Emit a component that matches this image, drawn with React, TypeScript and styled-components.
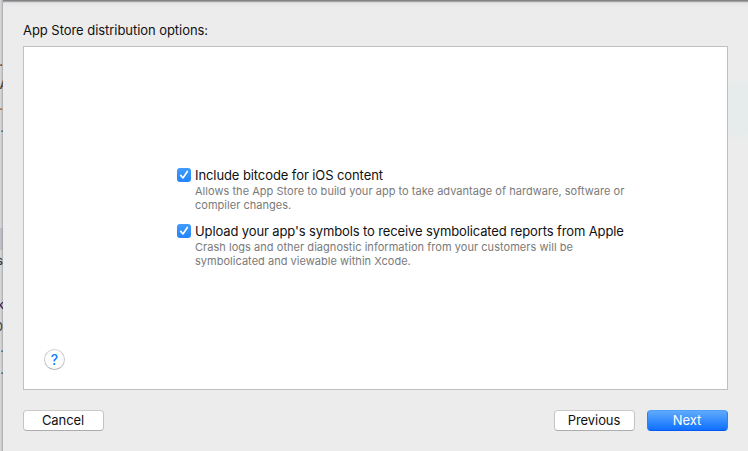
import React from "react";
import styled, { createGlobalStyle } from "styled-components";

const GlobalStyle = createGlobalStyle`
  * { box-sizing: border-box; }
  body { margin: 0; overflow: hidden; font-family: Inter, "Liberation Sans", sans-serif; }
`;

const Window = styled.div`
  display: flex;
  width: 748px;
  height: 451px;
  overflow: hidden;
  background: #ececec;
`;

const Backdrop = styled.div`
  position: relative;
  flex: none;
  width: 3px;
  height: 451px;
  overflow: hidden;
  background: linear-gradient(90deg, #d4d5d6 0 1px, #c9cacb 1px 2px, #b3b4b5 2px);
`;

const SelectedLine = styled.div`
  height: 22px;
  margin-top: 228px;
  background: linear-gradient(90deg, #c0c0c6 0 1px, #b7b7bd 1px 2px, #a7a7ac 2px);
`;

const CodeEdge = styled.span<{ $top: number; $right: number; $color: string }>`
  position: absolute;
  top: ${(p) => p.$top}px;
  right: ${(p) => p.$right}px;
  color: ${(p) => p.$color};
  font-size: 12px;
  font-weight: 500;
  line-height: 16px;
`;

const Sheet = styled.main`
  flex: 1;
  display: flex;
  flex-direction: column;
  padding: 21px 20px 0 20px;
  background:
    linear-gradient(#858386 0 1px, #a4a2a4 1px 2px, #d8d8d8 2px 3px, #e5e5e5 3px, #ececec 7px, transparent 7px),
    linear-gradient(transparent 78px, #e6ebec 90px 130px, transparent 142px) right top / 20px 100% no-repeat,
    #ececec;
`;

const Heading = styled.h1`
  margin: 0;
  height: 25px;
  font-size: 13px;
  font-weight: 400;
  line-height: 19px;
  letter-spacing: -0.05px;
  color: #111;
  white-space: nowrap;
`;

const Panel = styled.section`
  display: flex;
  flex-direction: column;
  width: 705px;
  height: 344px;
  padding: 121px 0 0 153px;
  border: 1px solid #c0c0c0;
  background: #fff;
`;

const Option = styled.div`
  display: grid;
  grid-template-columns: 18px 1fr;
  height: 56px;
`;

const Checkbox = styled.button`
  display: block;
  width: 14px;
  height: 14px;
  padding: 0;
  border: 0;
  border-radius: 3px;
  background: linear-gradient(#429cff, #2283fb);
  svg { display: block; }
`;

const OptionTitle = styled.div<{ $spacing: number }>`
  height: 16px;
  font-size: 13px;
  line-height: 14px;
  letter-spacing: ${(p) => p.$spacing}px;
  color: #111;
  white-space: nowrap;
`;

const Description = styled.div<{ $spacing: number }>`
  font-size: 11px;
  line-height: 14px;
  letter-spacing: ${(p) => p.$spacing}px;
  color: #7a7a7a;
  white-space: nowrap;
`;

const HelpButton = styled.button`
  width: 21px;
  height: 21px;
  margin: 69px 0 0 -133px;
  padding: 0;
  border: 1px solid #c6c6c6;
  border-top-color: #d4d4d4;
  border-bottom-color: #b4b4b4;
  border-radius: 50%;
  background: #fff;
  color: #147efb;
  font: 500 14px/19px Inter, sans-serif;
`;

const Footer = styled.footer`
  display: flex;
  width: 705px;
  margin-top: 20px;
`;

const Button = styled.button<{ $primary?: boolean; $pushRight?: boolean }>`
  width: 81px;
  height: 21px;
  margin-left: ${(p) => (p.$pushRight ? "auto" : p.$primary ? "12px" : "0")};
  padding: 0 1px 0 0;
  border: 1px solid;
  border-color: ${(p) => (p.$primary ? "#4ca0fb #2a82f8 #0758f3" : "#cbcbcb #c3c3c3 #adadad")};
  border-radius: 4px;
  background: ${(p) => (p.$primary ? "linear-gradient(#63adfb, #0a6dff) border-box" : "#fff")};
  color: ${(p) => (p.$primary ? "#fff" : "#111")};
  font: 400 13px/19px Inter, sans-serif;
  letter-spacing: -0.08px;
`;

const codeEdges = [
  { text: ".", top: 54, right: 0, color: "#493b36" },
  { text: "A", top: 77, right: -5, color: "#40434f" },
  { text: ".", top: 98, right: 0, color: "#8a5037" },
  { text: ".", top: 120, right: -1, color: "#355d80" },
  { text: "s", top: 253, right: 0, color: "#343c48" },
  { text: "k", top: 297, right: -1, color: "#38245c" },
  { text: "0", top: 319, right: 0, color: "#4b4b4d" },
  { text: ".", top: 340, right: -1, color: "#355d80" },
  { text: ".", top: 362, right: -1, color: "#355d80" },
];

const options = [
  {
    title: "Include bitcode for iOS content",
    titleSpacing: -0.09,
    lines: [
      { text: "Allows the App Store to build your app to take advantage of hardware, software or", spacing: 0.035 },
      { text: "compiler changes.", spacing: 0.02 },
    ],
  },
  {
    title: "Upload your app's symbols to receive symbolicated reports from Apple",
    titleSpacing: -0.12,
    lines: [
      { text: "Crash logs and other diagnostic information from your customers will be", spacing: 0.04 },
      { text: "symbolicated and viewable within Xcode.", spacing: 0.03 },
    ],
  },
];

export default function App() {
  return (
    <>
      <GlobalStyle />
      <Window>
        <Backdrop>
          <SelectedLine />
          {codeEdges.map((e) => (
            <CodeEdge key={e.top} $top={e.top} $right={e.right} $color={e.color}>{e.text}</CodeEdge>
          ))}
        </Backdrop>
        <Sheet>
          <Heading>App Store distribution options:</Heading>
          <Panel>
            {options.map((o) => (
              <Option key={o.title}>
                <Checkbox role="checkbox" aria-checked="true" aria-label={o.title}>
                  <svg width="14" height="14" viewBox="0 0 14 14" fill="none">
                    <path d="M3.7 7.4 6 10 10.3 3.5" stroke="#fff" strokeWidth="1.6" strokeLinecap="round" strokeLinejoin="round" />
                  </svg>
                </Checkbox>
                <div>
                  <OptionTitle $spacing={o.titleSpacing}>{o.title}</OptionTitle>
                  {o.lines.map((l) => (
                    <Description key={l.text} $spacing={l.spacing}>{l.text}</Description>
                  ))}
                </div>
              </Option>
            ))}
            <HelpButton aria-label="Help">?</HelpButton>
          </Panel>
          <Footer>
            <Button>Cancel</Button>
            <Button $pushRight>Previous</Button>
            <Button $primary>Next</Button>
          </Footer>
        </Sheet>
      </Window>
    </>
  );
}
